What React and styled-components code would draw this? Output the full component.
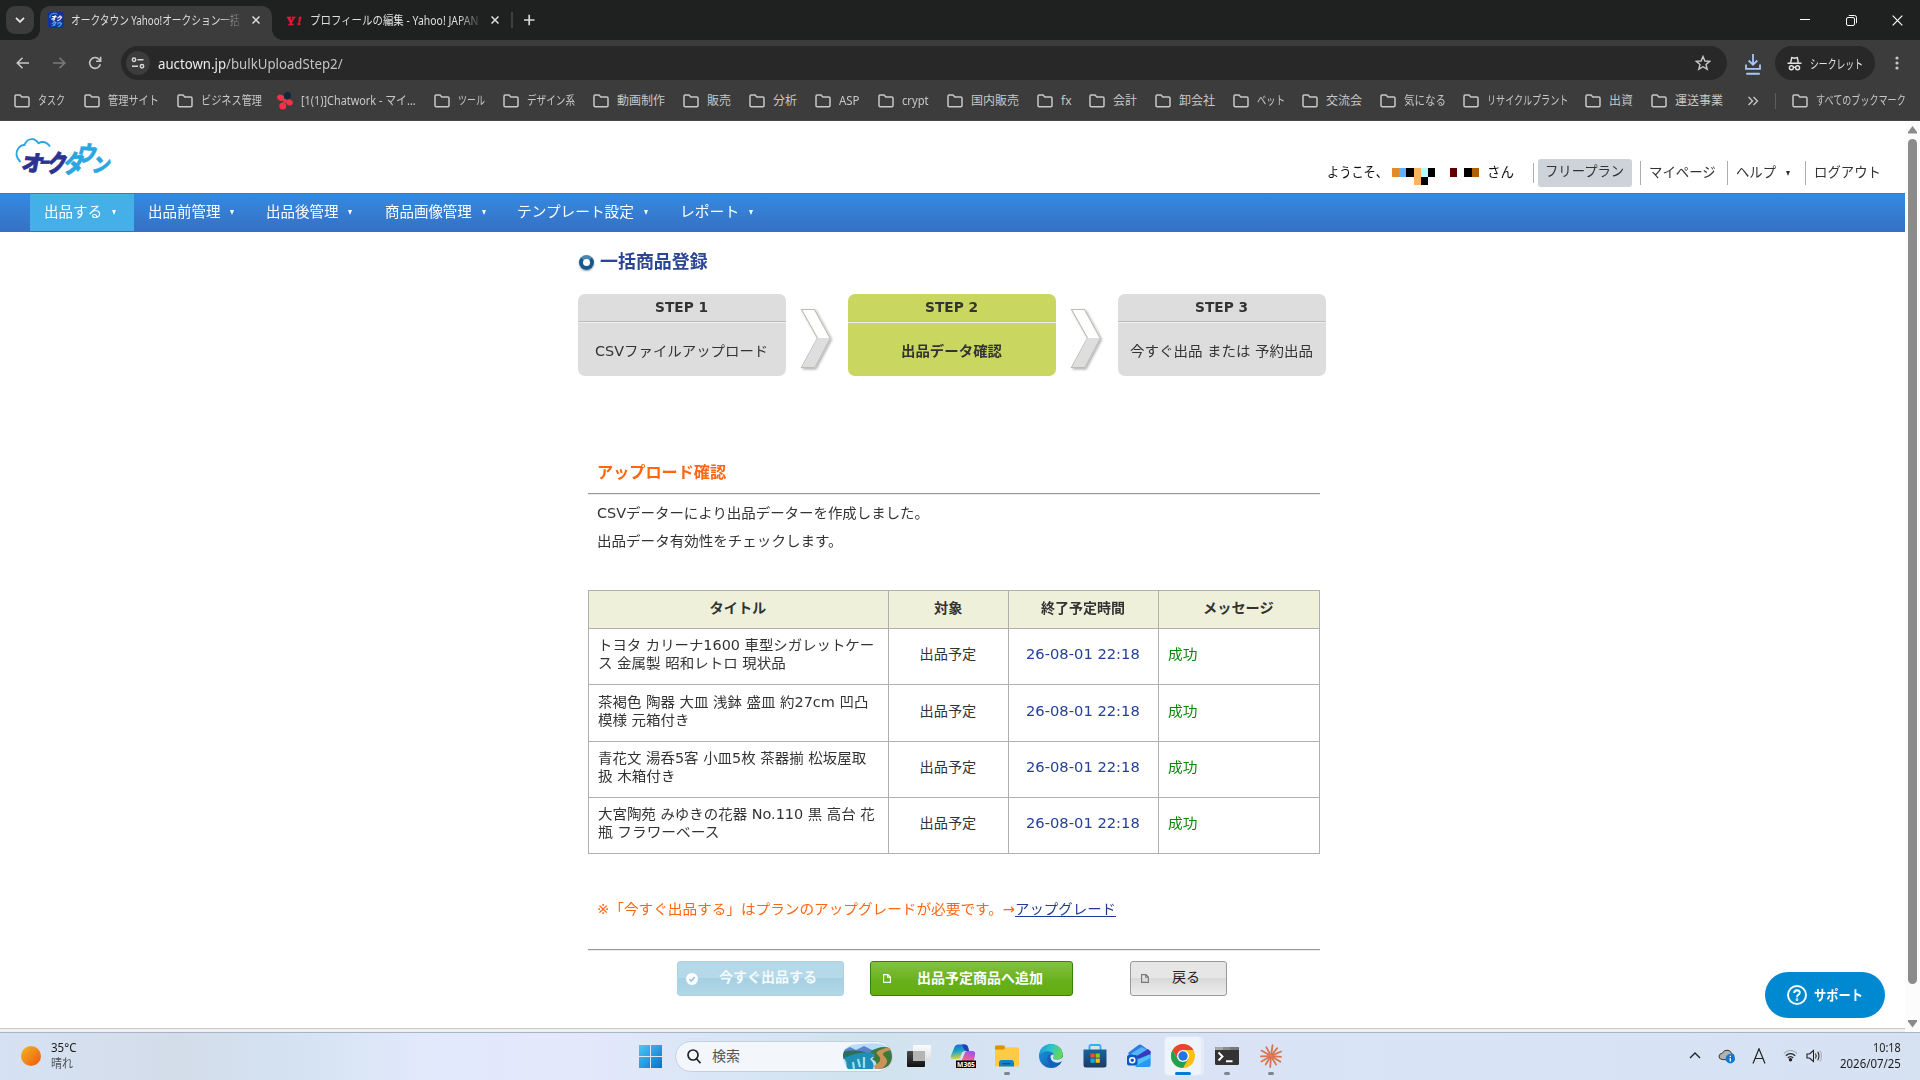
import React, { useLayoutEffect, useRef, useState } from "react";
import styled, { createGlobalStyle, css } from "styled-components";

const UI = `"Noto Sans", "Noto Sans CJK JP", sans-serif`;
const WEB = `"DejaVu Sans", "Noto Sans CJK JP", sans-serif`;

const Global = createGlobalStyle`
  * { box-sizing: border-box; }
  html, body { margin: 0; padding: 0; overflow: hidden; background: #fff; }
  body { font-family: ${WEB}; font-size: 14px; color: #333; }
  svg { display: block; flex: none; }
`;

/* ---------- text fitted to a column width ---------- */
const FitBox = styled.span`
  display: block;
  flex: none;
  width: ${(p) => p.$w}px;
  margin-left: ${(p) => p.$ml || 0}px;
  white-space: pre;
`;
const FitInner = styled.span`
  display: inline-block;
  white-space: pre;
  transform-origin: 0 50%;
`;
function Fit({ w, ml, children }) {
  const ref = useRef(null);
  const [scale, setScale] = useState(1);
  useLayoutEffect(() => {
    const measure = () => {
      if (ref.current && ref.current.offsetWidth) setScale(w / ref.current.offsetWidth);
    };
    measure();
    document.fonts.ready.then(measure);
  }, [w, children]);
  return (
    <FitBox $w={w} $ml={ml}>
      <FitInner ref={ref} style={{ transform: `scaleX(${scale})` }}>{children}</FitInner>
    </FitBox>
  );
}

/* ---------- browser chrome ---------- */
const Screen = styled.div`
  width: 1920px;
  height: 1080px;
  display: flex;
  flex-direction: column;
  overflow: hidden;
`;
const TabStrip = styled.div`
  height: 40px;
  background: #1f2120;
  display: flex;
  align-items: flex-start;
  padding: 6px 0 0 6px;
  font-family: ${UI};
  font-size: 12px;
  color: #dfdfdf;
`;
const TabSearch = styled.div`
  width: 28px;
  height: 28px;
  border-radius: 9px;
  background: #3c3c3c;
  display: flex;
  align-items: center;
  justify-content: center;
`;
const Tab = styled.div`
  position: relative;
  height: 34px;
  display: flex;
  align-items: center;
  padding: 0 0 6px 8px;
  margin-left: ${(p) => (p.$active ? 6 : 7)}px;
  width: ${(p) => (p.$active ? 232 : 227)}px;
  ${(p) =>
    p.$active &&
    css`
      background: #3c3c3c;
      border-radius: 10px 10px 0 0;
      &::before, &::after {
        content: "";
        position: absolute;
        bottom: 0;
        width: 10px;
        height: 10px;
      }
      &::before { left: -10px; background: radial-gradient(circle at 0 0, transparent 9.5px, #3c3c3c 10px); }
      &::after { right: -10px; background: radial-gradient(circle at 100% 0, transparent 9.5px, #3c3c3c 10px); }
    `}
`;
const TabTitle = styled.div`
  width: 170px;
  margin-left: 7px;
  padding-top: 1px;
  line-height: 22px;
  mask-image: linear-gradient(90deg, #000 148px, rgba(0, 0, 0, 0.15) 170px);
`;
const TabClose = styled.div`
  margin-left: 11px;
`;
const StripDivider = styled.div`
  width: 2px;
  height: 16px;
  margin: 6px 10px 0 5px;
  background: #3f4040;
`;
const WindowButtons = styled.div`
  margin-left: auto;
  display: flex;
  height: 28px;
  align-items: center;
`;
const WindowButton = styled.div`
  width: 46px;
  display: flex;
  justify-content: center;
`;
const Toolbar = styled.div`
  height: 45px;
  background: #3c3c3c;
  display: flex;
  align-items: center;
  padding: 1px 0 0 11px;
  color: #c7c7c7;
  font-family: ${UI};
`;
const NavButton = styled.div`
  width: 24px;
  height: 24px;
  margin-right: 12px;
  display: flex;
  align-items: center;
  justify-content: center;
  color: ${(p) => (p.$dim ? "#7b7b7b" : "#c7c7c7")};
`;
const Omnibox = styled.div`
  width: 1606px;
  height: 34px;
  margin-left: 2px;
  border-radius: 17px;
  background: #282828;
  display: flex;
  align-items: center;
  padding: 0 16px 0 5px;
  font-size: 14px;
  color: #c4c4c4;
  b { font-weight: 400; color: #ececec; }
`;
const SiteInfo = styled.div`
  width: 24px;
  height: 24px;
  border-radius: 12px;
  background: #3c3c3c;
  display: flex;
  align-items: center;
  justify-content: center;
  margin-right: 8px;
`;
const Push = styled.div`
  margin-left: auto;
`;
const Downloads = styled.div`
  width: 16px;
  margin: 3px 14px 0 18px;
`;
const Incognito = styled.div`
  width: 100px;
  height: 34px;
  border-radius: 17px;
  background: #282828;
  display: flex;
  align-items: center;
  padding-left: 12px;
  gap: 8px;
  font-size: 12.500px;
  color: #e3e3e3;
`;
const Dots = styled.div`
  margin-left: 20px;
`;
const Bookmarks = styled.div`
  height: 36px;
  background: #3c3c3c;
  border-bottom: 1px solid #474747;
  display: flex;
  align-items: center;
  padding: 0 0 3px 14px;
  font-family: ${UI};
  font-size: 12px;
  line-height: 20px;
  color: #c8c8c8;
`;
const BookmarkItem = styled.div`
  display: flex;
  align-items: center;
  gap: 8px;
  width: ${(p) => p.$w}px;
`;
const BookmarkDivider = styled.div`
  width: 1px;
  height: 16px;
  background: #5d5d5d;
  margin: 0 16px 0 16px;
`;

const bookmarks = [
  [14, "タスク", 27], [84, "管理サイト", 51], [177, "ビジネス管理", 61], [277, "[1(1)]Chatwork - マイ...", 115],
  [434, "ツール", 27], [503, "デザイン系", 48], [593, "動画制作", 48], [683, "販売", 24], [749, "分析", 24],
  [815, "ASP", 21], [878, "crypt", 27], [947, "国内販売", 48], [1037, "fx", 10], [1089, "会計", 24],
  [1155, "卸会社", 36], [1233, "ベット", 28], [1302, "交流会", 36], [1380, "気になる", 42],
  [1463, "リサイクルプラント", 81], [1585, "出資", 24], [1651, "運送事業", 48], [1747, "", 0],
];

const Folder = () => (
  <svg width="16" height="14" viewBox="0 0 16 14" fill="none" stroke="#c7c7c7" strokeWidth="1.5">
    <path d="M1 2.2Q1 1 2.2 1H6l1.8 2h6Q15 3 15 4.200V11.500Q15 12.700 13.800 12.700H2.200Q1 12.700 1 11.500Z" />
  </svg>
);
const Chatwork = () => (
  <svg width="16" height="18" viewBox="0 0 16 18">
    <ellipse cx="3.800" cy="5.800" rx="3.800" ry="3" fill="#f1334a" transform="rotate(25 3.800 5.800)" />
    <ellipse cx="12.500" cy="10.500" rx="3.300" ry="3" fill="#f1334a" transform="rotate(20 12.500 10.500)" />
    <circle cx="5.800" cy="14" r="3.500" fill="#f1334a" />
    <circle cx="8" cy="9" r="2" fill="#f1334a" />
    <circle cx="10.500" cy="3.700" r="3.600" fill="#16263a" />
  </svg>
);
const CloseX = ({ s = 8, w = 1.5, c = "#dedede" }) => (
  <svg width={s} height={s} viewBox="0 0 8 8" stroke={c} strokeWidth={w} fill="none">
    <path d="M.5 .5L7.500 7.500M7.500 .5L.5 7.500" />
  </svg>
);

function Browser() {
  return (
    <>
      <TabStrip>
        <TabSearch>
          <svg width="10" height="6" viewBox="0 0 10 6" fill="none" stroke="#e3e3e3" strokeWidth="1.900"><path d="M1 .8L5 4.800L9 .8" /></svg>
        </TabSearch>
        <Tab $active>
          <svg width="16" height="16" viewBox="0 0 16 16">
            <rect width="16" height="16" rx="2" fill="#17319c" />
            <path d="M2 6Q1.500 1.500 6 1.500Q8 .5 9.500 2.500" fill="none" stroke="#35b0e8" />
            <text transform="translate(2.500 8) rotate(5) skewX(-10)" fontSize="6.500" fontWeight="900" fill="#fff" fontFamily="Noto Sans CJK JP" textLength="11" lengthAdjust="spacingAndGlyphs">オク</text>
            <text transform="translate(2.500 14) rotate(5) skewX(-10)" fontSize="6.500" fontWeight="900" fill="#45b9ee" fontFamily="Noto Sans CJK JP" textLength="11" lengthAdjust="spacingAndGlyphs">タウ</text>
          </svg>
          <TabTitle><Fit w={169}>オークタウン Yahoo!オークション一括</Fit></TabTitle>
          <TabClose><CloseX /></TabClose>
        </Tab>
        <Tab>
          <svg width="16" height="16" viewBox="0 0 16 16">
            <text x="-1" y="12.800" fontSize="12.500" fontWeight="700" fill="#f0123a" stroke="#f0123a" strokeWidth=".6" fontFamily="Liberation Serif">Y</text>
            <text x="9.500" y="12.800" fontSize="13" fontWeight="700" fontStyle="italic" fill="#f0123a" stroke="#f0123a" strokeWidth=".5" fontFamily="Liberation Serif">!</text>
          </svg>
          <TabTitle><Fit w={168}>プロフィールの編集 - Yahoo! JAPAN</Fit></TabTitle>
          <TabClose><CloseX /></TabClose>
        </Tab>
        <StripDivider />
        <svg width="12" height="28" viewBox="0 0 12 28" stroke="#d8d8d8" strokeWidth="1.700"><path d="M1 14H11.500M6.200 8.700V19.300" /></svg>
        <WindowButtons>
          <WindowButton><svg width="10" height="2" viewBox="0 0 10 2"><path d="M0 .5H10" stroke="#fff" /></svg></WindowButton>
          <WindowButton>
            <svg width="11" height="11" viewBox="0 0 11 11" fill="none" stroke="#fff">
              <rect x=".5" y="2.500" width="8" height="8" rx="1.500" />
              <path d="M2.800 .5H8.500Q10.500 .5 10.500 2.500V8.200" />
            </svg>
          </WindowButton>
          <WindowButton><CloseX s={11} w={0.85} c="#fff" /></WindowButton>
        </WindowButtons>
      </TabStrip>
      <Toolbar>
        <NavButton>
          <svg width="14" height="12" viewBox="0 0 14 12" fill="none" stroke="currentColor" strokeWidth="1.600"><path d="M13 6H1.500M6.500 .8L1.300 6L6.500 11.200" /></svg>
        </NavButton>
        <NavButton $dim>
          <svg width="14" height="12" viewBox="0 0 14 12" fill="none" stroke="currentColor" strokeWidth="1.600"><path d="M1 6H12.500M7.500 .8L12.700 6L7.500 11.200" /></svg>
        </NavButton>
        <NavButton>
          <svg width="14" height="14" viewBox="0 0 14 14" fill="none" stroke="currentColor" strokeWidth="1.600">
            <path d="M12.300 8.300A5.400 5.400 0 1 1 11.200 3.500L12.500 5" />
            <path d="M12.600 .8V5.300H8.100" />
          </svg>
        </NavButton>
        <Omnibox>
          <SiteInfo>
            <svg width="14" height="12" viewBox="0 0 14 12" fill="none" stroke="#d5d5d5" strokeWidth="1.500">
              <circle cx="3" cy="2.700" r="1.700" /><path d="M6.500 2.700H12.500M1 9.200H7" /><circle cx="11" cy="9.200" r="1.700" />
            </svg>
          </SiteInfo>
          <Fit w={185}><b>auctown.jp</b>/bulkUploadStep2/</Fit>
          <Push>
            <svg width="16" height="16" viewBox="0 0 16 16" fill="none" stroke="#c7c7c7" strokeWidth="1.400"><path d="M8 1.500L9.900 6L14.700 6.400L11 9.500L12.200 14.200L8 11.700L3.800 14.200L5 9.500L1.300 6.400L6.100 6Z" /></svg>
          </Push>
        </Omnibox>
        <Downloads>
          <svg width="16" height="21" viewBox="0 0 16 21" fill="none" stroke="#a8c7fa" strokeWidth="1.800">
            <path d="M8 0V10.500M3.700 6.500L8 10.800L12.300 6.500M1 10.500V14.900H15V10.500" /><path d="M2 19.700H14" strokeWidth="2" strokeLinecap="round" />
          </svg>
        </Downloads>
        <Incognito>
          <svg width="15" height="15" viewBox="0 0 15 15" fill="none" stroke="#e3e3e3" strokeWidth="1.400">
            <path d="M3.700 6.500L4.700 1.500L7.500 2.200L10.300 1.500L11.300 6.500M.5 7.200H14.500" />
            <circle cx="4.400" cy="11.700" r="2" /><circle cx="10.600" cy="11.700" r="2" /><path d="M6.300 11.300H8.700" />
          </svg>
          <Fit w={53}>シークレット</Fit>
        </Incognito>
        <Dots><svg width="4" height="14" viewBox="0 0 4 14" fill="#c7c7c7"><circle cx="2" cy="2" r="1.600" /><circle cx="2" cy="7" r="1.600" /><circle cx="2" cy="12" r="1.600" /></svg></Dots>
      </Toolbar>
      <Bookmarks>
        {bookmarks.slice(0, -1).map(([x, label, tw], i) => (
          <BookmarkItem key={label} $w={bookmarks[i + 1][0] - x}>
            {label.includes("Chatwork") ? <Chatwork /> : <Folder />}
            <Fit w={tw}>{label}</Fit>
          </BookmarkItem>
        ))}
        <svg width="12" height="10" viewBox="0 0 12 10" fill="none" stroke="#c7c7c7" strokeWidth="1.400"><path d="M1.500 1L5.500 5L1.500 9M6.500 1L10.500 5L6.500 9" /></svg>
        <BookmarkDivider />
        <BookmarkItem $w={120}><Folder /><Fit w={90}>すべてのブックマーク</Fit></BookmarkItem>
      </Bookmarks>
    </>
  );
}

/* ---------- web page ---------- */
const Viewport = styled.div`
  height: 911px;
  display: flex;
  flex: none;
  background: #fff;
`;
const Page = styled.div`
  width: 1905px;
  height: 911px;
  display: flex;
  flex-direction: column;
  position: relative;
`;
const ScrollTrack = styled.div`
  width: 15px;
  background: #fcfcfc;
  display: flex;
  flex-direction: column;
  align-items: center;
  padding: 5px 0 4px;
`;
const Thumb = styled.div`
  width: 9px;
  height: 845px;
  margin: 5px 0 auto;
  border-radius: 5px;
  background: #8b8b8b;
`;
const SiteHeader = styled.header`
  height: 72px;
  display: flex;
  flex: none;
  padding-left: 14px;
`;
const LogoBox = styled.div`
  padding-top: 15px;
  svg { overflow: visible; }
`;
const Account = styled.div`
  margin-left: auto;
  display: flex;
  align-items: center;
  height: 28px;
  margin-top: 38px;
  padding-right: 24px;
  font-size: 14px;
  line-height: 24px;
  ${FitBox} { padding-bottom: 2px; }
`;
const Welcome = styled.div`
  display: flex;
  align-items: center;
  color: #111;
`;
const Sep = styled.div`
  width: 1px;
  height: ${(p) => p.$h || 24}px;
  background: #aaadb0;
  margin: 0 ${(p) => p.$r}px 0 ${(p) => p.$l}px;
`;
const Plan = styled.div`
  width: 94px;
  height: 28px;
  border-radius: 3px;
  background: #ced3da;
  padding-left: 7px;
`;
const Mosaic = styled.div`
  display: grid;
  grid-template-columns: 7px 7px 8px 7px 7px 7px 15px 7px 7px 8px 7px;
  grid-template-rows: 9px 8px;
  margin: 6px 8px 0 4px;
`;
const Cell = styled.i`
  background: ${(p) => p.$c};
`;
const MainNav = styled.nav`
  height: 39px;
  flex: none;
  display: flex;
  background: linear-gradient(#348ae0, #3670c4);
  border-top: 1px solid #2a80d8;
  padding-left: 30px;
  color: #fff;
`;
const NavEntry = styled.div`
  height: 37px;
  width: ${(p) => p.$w}px;
  padding: 0 0 1px 14px;
  display: flex;
  align-items: center;
  background: ${(p) => (p.$active ? "#45b0e8" : "transparent")};
  font-size: 14.3px;
  ${FitBox} { padding-bottom: 4px; }
`;
const Caret = styled.span`
  width: 0;
  height: 0;
  border: 2.500px solid transparent;
  border-top: 5px solid ${(p) => p.$c || "#fff"};
  border-bottom: 0;
  margin-left: 10px;
`;
const Main = styled.main`
  width: 748px;
  margin-left: 578px;
`;
const TitleRow = styled.h1`
  display: flex;
  align-items: center;
  gap: 6px;
  height: 28px;
  margin: 16px 0 0;
  padding-left: 1px;
  font-size: 17.8px;
  line-height: 28px;
  color: #2c4693;
`;
const Bullet = styled.span`
  width: 15px;
  height: 15px;
  border-radius: 50%;
  border: 4.500px solid #15598f;
  border-top-color: #4a86b0;
  box-shadow: 0 1px 2px #999;
`;
const Steps = styled.div`
  display: flex;
  margin-top: 18px;
  height: 82px;
`;
const Step = styled.div`
  width: 208px;
  height: 82px;
  border-radius: 7px;
  overflow: hidden;
  background: ${(p) => (p.$on ? "#c9d761" : "#ddd")};
`;
const StepHead = styled.div`
  height: 29px;
  border-bottom: 1px solid #efefef;
  box-shadow: inset 0 -1px 0 #bcbcbc;
  display: flex;
  justify-content: center;
  padding-right: 2px;
  font-weight: 700;
  font-size: 14px;
  line-height: 26px;
`;
const StepBody = styled.div`
  display: flex;
  justify-content: center;
  padding: 15px 2px 0 0;
  line-height: 26px;
  font-weight: ${(p) => (p.$on ? 700 : 400)};
`;
const Chevron = styled.div`
  width: 62px;
  padding: 14px 0 0 14px;
`;
const Section = styled.section`
  width: 732px;
  margin: 83px 0 0 10px;
`;
const SectionTitle = styled.h2`
  margin: 0;
  height: 34px;
  padding-left: 9px;
  font-size: 16px;
  line-height: 28px;
  color: #ff6613;
`;
const Rule = styled.div`
  height: 2px;
  background: #999;
  border-bottom: 1px solid #ececec;
`;
const Line = styled.div`
  height: 28px;
  line-height: 28px;
  padding-left: 9px;
  display: flex;
`;
const Lines = styled.div`
  padding: 4px 0 35px;
`;
const Table = styled.div`
  display: grid;
  grid-template-columns: 300px 120px 150px 161px;
  grid-template-rows: 38px 56px 57px 56px 56px;
  border: solid #b0b0ae;
  border-width: 1px 0 0 1px;
`;
const Td = styled.div`
  border: solid #b0b0ae;
  border-width: 0 1px 1px 0;
  display: flex;
  flex-direction: column;
  justify-content: center;
  align-items: ${(p) => (p.$left ? "flex-start" : "center")};
  padding-left: ${(p) => (p.$left ? 9 : 0)}px;
  padding-right: ${(p) => (p.$left ? 0 : 1)}px;
  padding-bottom: ${(p) => (p.$head ? 2 : 3)}px;
  line-height: 17.800px;
  font-size: 14.2px;
  color: ${(p) => p.$c || "#333"};
  background: ${(p) => (p.$head ? "#eef0d9" : "#fff")};
  font-weight: ${(p) => (p.$head ? 700 : 400)};
`;
const Note = styled.div`
  display: flex;
  padding-left: 9px;
  margin-top: 41px;
  height: 54px;
  line-height: 28px;
  color: #ff6613;
`;
const Link = styled.a`
  color: #203a92;
  box-shadow: inset 0 -1px 0 #203a92;
  height: 22px;
`;
const Buttons = styled.div`
  display: flex;
  padding: 10px 0 0 89px;
`;
const skins = {
  blue: css`
    width: 167px; margin-right: 26px; color: #f4fafd; font-weight: 700;
    border: 1px solid #a9d3e5;
    background: linear-gradient(#b5d9e9 50%, #a5d0e2 50%, #b3d8e7);
  `,
  green: css`
    width: 203px; margin-right: 57px; color: #fff; font-weight: 700;
    border: 1px solid #31830c;
    background: linear-gradient(#85c142, #67b01a 60%, #62ad12);
  `,
  gray: css`
    width: 97px; color: #222;
    border: 1px solid #999;
    background: linear-gradient(#e6e6e6 50%, #d9d9d9 50%, #ededed);
  `,
};
const Button = styled.div`
  height: 35px;
  border-radius: 3px;
  display: flex;
  align-items: center;
  padding: 0 0 0 ${(p) => p.$pl}px;
  gap: ${(p) => p.$gap}px;
  line-height: 26px;
  ${FitBox} { padding-bottom: ${(p) => (p.$skin === "green" ? 2 : 4)}px; }
  ${(p) => skins[p.$skin]}
`;
const Support = styled.div`
  position: absolute;
  left: 1765px;
  top: 851px;
  width: 120px;
  height: 46px;
  border-radius: 23px;
  background: #0089d0;
  color: #fff;
  font: 700 14px/24px ${UI};
  display: flex;
  align-items: center;
  padding-left: 22px;
  gap: 7px;
`;
const PageEdge = styled.div`
  margin-top: auto;
  height: 4px;
  background: #efefef;
  border-top: 1px solid #c9c9c9;
`;

const M = { k: "#000", o: "#ffb25f", d: "#df8b26", b: "#5fb0ff", c: "#b2ffff", r: "#5f0000", n: "#b25f00", _: "transparent" };

const Logo = () => (
  <svg width="98" height="42" viewBox="14 136 98 42" fontFamily="Noto Sans CJK JP" fontWeight="900">
    <path d="M20.500 162Q13.500 155 18.500 148Q21.500 144.500 24.500 145Q27 138 34 139.300Q37 140.500 38.500 143.200Q45 139.500 50 146.500" fill="none" stroke="#2ba6e1" strokeWidth="1.900" />
    <g fill="#2b3390" stroke="#2b3390" strokeWidth=".7">
      <text transform="translate(20.500 170.500) rotate(3) skewX(-9)" fontSize="22">オ</text>
      <text transform="translate(39 168) skewX(-9) scale(.68 1)" fontSize="15">ー</text>
      <text transform="translate(46 172) rotate(2) skewX(-9) scale(.85 1.080)" fontSize="23">ク</text>
    </g>
    <g fill="#2ba6e1" stroke="#2ba6e1" strokeWidth=".5">
      <text transform="translate(62.500 173) skewX(-9) scale(.86 1.050)" fontSize="24">タ</text>
      <text transform="translate(75.500 160.500) rotate(5) skewX(-9) scale(.9 1)" fontSize="22">ウ</text>
      <text transform="translate(91 171.500) skewX(-12) scale(.92 1)" fontSize="20">ン</text>
    </g>
  </svg>
);
const ChevronArt = () => (
  <svg width="36" height="66" viewBox="0 0 36 66">
    <defs><filter id="sh" x="-20%" y="-20%" width="150%" height="150%"><feDropShadow dx="1.500" dy="1.500" stdDeviation="1" floodOpacity=".3" /></filter></defs>
    <g filter="url(#sh)">
      <path d="M1.500 1.500H14.500L30 30L14.500 59.500H1.500L17.500 30Z" fill="#fff" stroke="#bcbcb4" strokeWidth="1.100" />
      <path d="M17.500 30H29.800L14.300 59H2.300Z" fill="#dedede" />
    </g>
  </svg>
);
const FileIcon = ({ c }) => (
  <svg width="8" height="9" viewBox="0 0 8 9" fill="none" stroke={c} strokeWidth="1.100"><path d="M.6 .6H5L7.400 3V8.400H.6ZM4.700 .6V3.200H7.400" /></svg>
);

const navItems = [["出品する", 58, 104, 1], ["出品前管理", 72, 118], ["出品後管理", 72, 119], ["商品画像管理", 87, 132], ["テンプレート設定", 117, 163], ["レポート", 59, 110]];
const rows = [
  [["トヨタ カリーナ1600 車型シガレットケー", 276], ["ス 金属製 昭和レトロ 現状品", 188]],
  [["茶褐色 陶器 大皿 浅鉢 盛皿 約27cm 凹凸", 270], ["模様 元箱付き", 92]],
  [["青花文 湯呑5客 小皿5枚 茶器揃 松坂屋取", 268], ["扱 木箱付き", 77]],
  [["大宮陶苑 みゆきの花器 No.110 黒 高台 花", 277], ["瓶 フラワーベース", 121]],
];

function Site() {
  return (
    <Viewport>
      <Page>
        <SiteHeader>
          <LogoBox><Logo /></LogoBox>
          <Account>
            <Welcome>
              <Fit w={61}>ようこそ、</Fit>
              <Mosaic>
                {[..."dbkock_r_kn___ok_____"].map((ch, i) => (
                  <Cell key={i} $c={M[ch]} />
                ))}
              </Mosaic>
              <Fit w={27}>さん</Fit>
            </Welcome>
            <Sep $l={19} $r={4} $h={20} />
            <Plan><Fit w={79}>フリープラン</Fit></Plan>
            <Sep $l={8} $r={8} />
            <Fit w={67}>マイページ</Fit>
            <Sep $l={11} $r={8} />
            <Fit w={40}>ヘルプ</Fit>
            <Caret $c="#333" />
            <Sep $l={15} $r={8} />
            <Fit w={67}>ログアウト</Fit>
          </Account>
        </SiteHeader>
        <MainNav>
          {navItems.map(([t, w, slot, on]) => (
            <NavEntry key={t} $w={slot} $active={on}><Fit w={w}>{t}</Fit><Caret /></NavEntry>
          ))}
        </MainNav>
        <Main>
          <TitleRow><Bullet /><Fit w={108}>一括商品登録</Fit></TitleRow>
          <Steps>
            <Step><StepHead><Fit w={53}>STEP 1</Fit></StepHead><StepBody><Fit w={173}>CSVファイルアップロード</Fit></StepBody></Step>
            <Chevron><ChevronArt /></Chevron>
            <Step $on><StepHead><Fit w={53}>STEP 2</Fit></StepHead><StepBody $on><Fit w={101}>出品データ確認</Fit></StepBody></Step>
            <Chevron><ChevronArt /></Chevron>
            <Step><StepHead><Fit w={53}>STEP 3</Fit></StepHead><StepBody><Fit w={183}>今すぐ出品 または 予約出品</Fit></StepBody></Step>
          </Steps>
          <Section>
            <SectionTitle><Fit w={129}>アップロード確認</Fit></SectionTitle>
            <Rule />
            <Lines>
              <Line><Fit w={332}>CSVデーターにより出品データーを作成しました。</Fit></Line>
              <Line><Fit w={246}>出品データ有効性をチェックします。</Fit></Line>
            </Lines>
            <Table>
              <Td $head><Fit w={57}>タイトル</Fit></Td>
              <Td $head><Fit w={28}>対象</Fit></Td>
              <Td $head><Fit w={84}>終了予定時間</Fit></Td>
              <Td $head><Fit w={71}>メッセージ</Fit></Td>
              {rows.map((lines, i) => (
                <React.Fragment key={i}>
                  <Td $left>{lines.map(([t, w]) => <Fit key={t} w={w}>{t}</Fit>)}</Td>
                  <Td><Fit w={57}>出品予定</Fit></Td>
                  <Td $c="#24409a"><Fit w={114}>26-08-01 22:18</Fit></Td>
                  <Td $left $c="#0a850a"><Fit w={29}>成功</Fit></Td>
                </React.Fragment>
              ))}
            </Table>
            <Note><Fit w={418}>※「今すぐ出品する」はプランのアップグレードが必要です。→</Fit><Link><Fit w={101}>アップグレード</Fit></Link></Note>
            <Rule />
            <Buttons>
              <Button $skin="blue" $pl={8} $gap={21}>
                <svg width="12" height="12" viewBox="0 0 12 12"><circle cx="6" cy="6" r="6" fill="#fff" /><path d="M3.500 6.200L5.300 8L8.700 4" fill="none" stroke="#8fc5dc" strokeWidth="1.600" /></svg>
                <Fit w={98}>今すぐ出品する</Fit>
              </Button>
              <Button $skin="green" $pl={12} $gap={26}><FileIcon c="#fff" /><Fit w={126}>出品予定商品へ追加</Fit></Button>
              <Button $skin="gray" $pl={10} $gap={23}><FileIcon c="#777" /><Fit w={28}>戻る</Fit></Button>
            </Buttons>
          </Section>
        </Main>
        <Support>
          <svg width="20" height="20" viewBox="0 0 20 20" fill="none" stroke="#fff" strokeWidth="1.900">
            <circle cx="10" cy="10" r="9" /><path d="M7.200 8Q7.400 5.300 10.100 5.300Q12.800 5.400 12.800 7.700Q12.700 9.200 10.900 10.200Q10 10.800 10 12.200" /><circle cx="10" cy="14.700" r=".4" />
          </svg>
          <Fit w={49}>サポート</Fit>
        </Support>
        <PageEdge />
      </Page>
      <ScrollTrack>
        <svg width="9" height="8" viewBox="0 0 9 8"><path d="M4.500 0L9 6V7.500H0V6Z" fill="#8b8b8b" /></svg>
        <Thumb />
        <svg width="9" height="8" viewBox="0 0 9 8"><path d="M4.500 7.500L9 1.500V0H0V1.500Z" fill="#8b8b8b" /></svg>
      </ScrollTrack>
    </Viewport>
  );
}

/* ---------- taskbar ---------- */
const Taskbar = styled.div`
  height: 48px;
  flex: none;
  border-top: 1px solid #a9b5c8;
  background: linear-gradient(90deg, #d6e2f3, #d3dce9 9%, #d4e2f1 15%, #e1e9fb 22%, #e4e8fb 30%, #d9e6f6 37%, #d1e3ef 45%, #d6e3f2 52%, #d9e3f5 62%, #d8e4f5 80%, #d6e1f2);
  display: flex;
  font-family: ${UI};
  font-size: 12px;
  color: #1b1b1b;
`;
const Weather = styled.div`
  width: 639px;
  padding: 0 0 2px 21px;
  display: flex;
  align-items: center;
  gap: 10px;
`;
const Stack = styled.div`
  display: flex;
  flex-direction: column;
  align-items: ${(p) => (p.$end ? "flex-end" : "flex-start")};
  line-height: 15.500px;
  span:nth-child(2) { color: ${(p) => (p.$end ? "#1b1b1b" : "#4c5158")}; }
`;
const StartIcon = styled.div`
  width: 36px;
  padding-top: 12px;
`;
const Search = styled.div`
  width: 218px;
  height: 31px;
  margin: 8px 4px 0 0;
  border-radius: 16px;
  background: #f3f7fc;
  border: 1px solid #c6d0dd;
  display: flex;
  align-items: center;
  padding-left: 11px;
  font-size: 14px;
  color: #555;
  line-height: 22px;
  ${FitBox} { padding-bottom: 2px; }
`;
const SearchArt = styled.div`
  margin-left: auto;
`;
const AppSlot = styled.div`
  width: 44px;
  height: 47px;
  display: flex;
  flex-direction: column;
  align-items: center;
`;
const Tile = styled.div`
  width: 36px;
  height: 38px;
  margin-top: 4px;
  padding-bottom: 1px;
  border-radius: 4px;
  display: flex;
  align-items: center;
  justify-content: center;
  background: ${(p) => (p.$active ? "#eef4fc" : "transparent")};
  box-shadow: ${(p) => (p.$active ? "0 0 0 1px #dfe8f3, 3px 0 0 #e6edf8" : "none")};
`;
const Mark = styled.div`
  width: ${(p) => (p.$active ? 16 : 6)}px;
  height: 3px;
  margin-top: -3px;
  border-radius: 2px;
  background: ${(p) => (p.$active ? "#0a78d4" : "#7d858d")};
  position: relative;
`;
const Tray = styled.div`
  margin-left: auto;
  display: flex;
  align-items: center;
  padding: 0 19px 2px 0;
`;
const TrayItem = styled.div`
  width: ${(p) => p.$w}px;
  display: flex;
  justify-content: center;
`;

const icons = {
  task: (
    <svg width="24" height="24" viewBox="0 0 24 24">
      <defs><linearGradient id="tk" x1="0" y1="0" x2="0" y2="1"><stop offset="0" stopColor="#4a4a4a" /><stop offset="1" stopColor="#111" /></linearGradient>
        <linearGradient id="tw" x1="0" y1="0" x2="0" y2="1"><stop offset="0" stopColor="#fff" /><stop offset="1" stopColor="#dcdcdc" /></linearGradient></defs>
      <rect x="0" y="7" width="18" height="16" rx="1" fill="url(#tk)" />
      <rect x="6" y="1" width="18" height="16" rx="1" fill="url(#tw)" opacity=".9" />
      <rect x="6" y="7" width="12" height="10" fill="#b4b4b4" />
    </svg>
  ),
  m365: (
    <svg width="26" height="24" viewBox="0 0 26 24">
      <defs>
        <linearGradient id="ma" x1=".3" y1="0" x2=".5" y2="1"><stop offset="0" stopColor="#1c68dc" /><stop offset=".45" stopColor="#18a5c8" /><stop offset="1" stopColor="#f2d530" /></linearGradient>
        <linearGradient id="mb" x1=".8" y1="0" x2=".3" y2="1"><stop offset="0" stopColor="#9a50ec" /><stop offset="1" stopColor="#f56a90" /></linearGradient>
      </defs>
      <path d="M8 .5H15Q17.500 .5 18 3L19 7H16Q12.500 7 11.500 10L10 14Q9.500 15 7 15H3Q0 15 1 11.500L4.500 3Q5.300 .5 8 .5Z" fill="url(#ma)" />
      <path d="M17 7H22Q26 7 25 11L23.800 17H11.500L14.500 9.500Q15.200 7 17 7Z" fill="url(#mb)" />
      <path d="M12 .5H15Q17.500 .5 18 3L19 7H16.500Q14.500 7 13.800 5Z" fill="#2041b8" />
      <rect x="6" y="16.500" width="20" height="7.500" fill="#000" />
      <text x="7" y="23" fontSize="7.500" fontWeight="700" fill="#fff" textLength="18" lengthAdjust="spacingAndGlyphs" fontFamily="Noto Sans">M365</text>
    </svg>
  ),
  files: (
    <svg width="24" height="22" viewBox="0 0 24 22">
      <path d="M0 2Q0 .5 1.500 .5H8Q9.500 .5 10 2.500H22.500Q24 2.500 24 4V10H0Z" fill="#fdc32f" />
      <path d="M0 2Q0 .5 1.500 .5H8Q10 .5 10 2.500Q10 4.500 8 4.500H0Z" fill="#d99300" />
      <path d="M0 5H8Q9.500 5 10.500 3H24V20Q24 21.500 22.500 21.500H1.500Q0 21.500 0 20Z" fill="#fecb45" />
      <path d="M4 21.500V18Q4 15 7 15H16Q19 15 19 18V21.500Z" fill="#1580cc" />
      <rect x="7.500" y="18" width="8" height="1.400" fill="#0b5394" />
    </svg>
  ),
  edge: (
    <svg width="24" height="24" viewBox="0 0 24 24">
      <defs>
        <linearGradient id="ea" x1="0" y1="0" x2="1" y2=".3"><stop offset="0" stopColor="#1b8fdc" /><stop offset=".5" stopColor="#2cc3d0" /><stop offset="1" stopColor="#63d957" /></linearGradient>
        <linearGradient id="eb" x1="0" y1="0" x2="1" y2="1"><stop offset="0" stopColor="#1c9ce2" /><stop offset="1" stopColor="#0c4fa8" /></linearGradient>
        <clipPath id="ec"><circle cx="12" cy="12" r="12" /></clipPath>
      </defs>
      <g clipPath="url(#ec)">
        <rect width="24" height="24" fill="url(#eb)" />
        <path d="M0 11Q1.500 0 12.500 0Q24 .8 24 10.200Q23.300 15.800 17.300 15.800Q13.500 15.800 14.200 13.800Q15.500 12.500 14.800 10.500Q13 7.200 8.500 7.200Q2.500 7.200 0 11Z" fill="url(#ea)" />
        <path d="M9 11Q6.500 20 14 23.500Q20 23 22.800 18.500Q19.500 20.500 14.500 18Q10.300 15.600 11.700 11.500Z" fill="#1062bb" />
      </g>
      <path d="M11.700 12Q10.800 15.500 14.500 17.700Q19 19.800 22.300 17.600Q23.300 17.500 24.300 14.500V12Q22 16.200 17.300 15.800Q13.500 15.800 14.200 13.800Q15.200 12.500 14.500 10.500Q12.300 10 11.700 12Z" fill="#d6e4f3" />
    </svg>
  ),
  store: (
    <svg width="24" height="24" viewBox="0 0 24 24">
      <defs><linearGradient id="st" x1="0" y1="0" x2="0" y2="1"><stop offset="0" stopColor="#17649f" /><stop offset="1" stopColor="#1d3a63" /></linearGradient></defs>
      <path d="M6.500 6V2.500Q6.500 1 8 1H16Q17.500 1 17.500 2.500V6" fill="none" stroke="#28b4f5" strokeWidth="1.900" />
      <path d="M.5 5.500H23.500V21Q23.500 23.500 21 23.500H3Q.5 23.500 .5 21Z" fill="url(#st)" />
      <rect x="7.500" y="9.500" width="4.200" height="4.200" fill="#f1511b" /><rect x="12.600" y="9.500" width="4.200" height="4.200" fill="#80cc28" />
      <rect x="7.500" y="14.600" width="4.200" height="4.200" fill="#00adef" /><rect x="12.600" y="14.600" width="4.200" height="4.200" fill="#fbbc09" />
    </svg>
  ),
  outlook: (
    <svg width="24" height="24" viewBox="0 0 24 24">
      <path d="M1.500 8.500L11.500 1Q13 0 14.500 1L23.500 7.500V14L8 16L1.500 13Z" fill="#2a7be4" />
      <path d="M4 9.500L14.500 3L23.500 7.500L13 14.500Z" fill="#54b4f5" />
      <path d="M9 12.500L21 5L23.500 7.500V10.500L14 16Z" fill="#3c37c4" />
      <path d="M9 16L23.500 10V20.500Q23.500 23 21 23H9Z" fill="#4cc2f8" />
      <path d="M8 22.500L23.500 14V20.500Q23.500 23 21 23H9Z" fill="#2b96f0" />
      <rect x="0" y="11" width="10.500" height="10.500" rx="2" fill="#0f59bd" />
      <circle cx="5.250" cy="16.250" r="2.500" fill="none" stroke="#fff" strokeWidth="1.500" />
    </svg>
  ),
  chrome: (
    <svg width="24" height="24" viewBox="0 0 24 24">
      <circle cx="12" cy="12" r="12" fill="#fbc116" />
      <path d="M12 6H22.400A12 12 0 0 0 1.600 6L6.800 15Z" fill="#ea4335" />
      <path d="M17.200 15L12 24A12 12 0 0 1 1.600 6L6.800 15Z" fill="#1fa353" />
      <circle cx="12" cy="12" r="6" fill="#fff" /><circle cx="12" cy="12" r="4.700" fill="#2672e8" />
    </svg>
  ),
  term: (
    <svg width="24" height="18" viewBox="0 0 24 18">
      <rect width="24" height="18" rx="1.500" fill="#333" /><path d="M0 1.500Q0 0 1.500 0H22.500Q24 0 24 1.500V3H0Z" fill="#777" /><path d="M0 1.500Q0 0 1.500 0H8V3H0Z" fill="#a8a8a8" /><path d="M8 0H15V3H8Z" fill="#8b8b8b" />
      <path d="M3.500 5.500L7.500 9.500L3.500 13.500M11 14.200H17.500" fill="none" stroke="#fff" strokeWidth="1.900" />
    </svg>
  ),
  claude: (
    <svg width="24" height="24" viewBox="0 0 24 24" stroke="#d97350" strokeWidth="1.800" strokeLinecap="round">
      {[8, 38, 66, 95, 122, 150, 184, 212, 240, 268, 300, 332].map((a, i) => (
        <path key={a} d={`M12 10.500V${i % 2 ? 2 : 1}`} transform={`rotate(${a} 12 12)`} />
      ))}
    </svg>
  ),
};
const apps = ["task", "m365", "files", "edge", "store", "outlook", "chrome", "term", "claude"];
const running = ["files", "chrome", "term", "claude"];

function Bar() {
  return (
    <Taskbar>
      <Weather>
        <svg width="20" height="20" viewBox="0 0 20 20">
          <defs><linearGradient id="sun" x1="0" y1="0" x2="1" y2="1"><stop offset="0" stopColor="#f0b828" /><stop offset="1" stopColor="#f0560a" /></linearGradient></defs>
          <circle cx="10" cy="10" r="10" fill="url(#sun)" />
        </svg>
        <Stack><Fit w={25}>35°C</Fit><Fit w={22}>晴れ</Fit></Stack>
      </Weather>
      <StartIcon>
        <svg width="23" height="23" viewBox="0 0 23 23">
          <defs><linearGradient id="wn" x1="0" y1="0" x2="1" y2="1"><stop offset="0" stopColor="#4cc8f5" /><stop offset="1" stopColor="#0870cc" /></linearGradient></defs>
          <path d="M0 0H11V11H0ZM12 0H23V11H12ZM0 12H11V23H0ZM12 12H23V23H12Z" fill="url(#wn)" />
        </svg>
      </StartIcon>
      <Search>
        <svg width="14" height="15" viewBox="0 0 14 15" fill="none" stroke="#222" strokeWidth="1.700"><circle cx="6" cy="6" r="5" /><path d="M9.500 9.800L13.500 14.200" /></svg>
        <Fit w={28} ml={11}>検索</Fit>
        <SearchArt>
          <svg width="50" height="27" viewBox="0 0 50 27">
            <defs><clipPath id="pc"><path d="M10 2Q30 -1 40 1Q50 4 50 14Q49 26 36 26L6 26Q1 20 1 12Q2 4 10 2Z" /></clipPath></defs>
            <g clipPath="url(#pc)">
              <rect width="50" height="27" fill="#b9dcf8" />
              <path d="M0 8L8 4L14 7L22 3L30 7L50 4V14H0Z" fill="#5b83c9" />
              <path d="M0 9Q12 6 24 9L20 14L0 16Z" fill="#2d6e5b" />
              <path d="M2 15Q14 9 30 9Q34 12 28 16Q34 22 30 27H4Q6 20 2 15Z" fill="#1f8fb8" />
              <path d="M16 16L18 24M22 14L22 25M11 19L12 26" stroke="#9fe0e6" strokeWidth="2.200" />
              <path d="M28 9Q40 1 50 6V27H32Q38 20 30 16Q36 12 28 9Z" fill="#3c7a3a" />
              <path d="M48 4Q30 8 36 12Q42 17 32 23L34 27H38Q50 19 42 13Q38 9 50 7Z" fill="#c9935a" />
            </g>
          </svg>
        </SearchArt>
      </Search>
      {apps.map((a) => (
        <AppSlot key={a}>
          <Tile $active={a === "chrome"}>{icons[a]}</Tile>
          {running.includes(a) && <Mark $active={a === "chrome"} />}
        </AppSlot>
      ))}
      <Tray>
        <TrayItem $w={42}><svg width="12" height="7" viewBox="0 0 12 7" fill="none" stroke="#222" strokeWidth="1.400"><path d="M1 6L6 1L11 6" /></svg></TrayItem>
        <TrayItem $w={22}>
          <svg width="18" height="16" viewBox="0 0 18 16">
            <path d="M4 11.500Q.8 11 1 8Q1.500 5.500 4 5.500Q6 1.500 10 2.200Q13 3 13.500 5.500Q16 6 16 8.500L12 12Z" fill="#b5b3b0" stroke="#3a3a3a" />
            <circle cx="12.300" cy="10.800" r="4.700" fill="#0b78d8" /><path d="M12.300 10V13.500M12.300 7.800V9" stroke="#fff" strokeWidth="1.300" />
          </svg>
        </TrayItem>
        <TrayItem $w={42}><svg width="14" height="16" viewBox="0 0 14 16" fill="none" stroke="#222" strokeWidth="1.200"><path d="M1 15.500L7 .8L13 15.500M3.200 10.500H10.800" /></svg></TrayItem>
        <TrayItem $w={21}>
          <svg width="15" height="13" viewBox="0 0 15 13" fill="none" stroke="#222" strokeWidth="1.200">
            <path d="M.8 4.500Q7.500 -1.800 14.200 4.500" stroke="#a8b0bb" /><path d="M2.800 6.800Q7.500 2.300 12.200 6.800M4.800 9Q7.500 6.300 10.200 9" /><circle cx="7.500" cy="10.800" r="1.100" fill="#222" />
          </svg>
        </TrayItem>
        <TrayItem $w={26}>
          <svg width="17" height="14" viewBox="0 0 17 14" fill="none" stroke="#222" strokeWidth="1.100">
            <path d="M1 5H3.500L7.500 1.500V12.500L3.500 9H1ZM9.500 4.500Q11 7 9.500 9.500M11.700 2.800Q14.200 7 11.700 11.200" /><path d="M13.800 1.500Q17.200 7 13.800 12.500" stroke="#a8b0bb" />
          </svg>
        </TrayItem>
        <TrayItem $w={13} />
        <Stack $end><Fit w={28}>10:18</Fit><Fit w={61}>2026/07/25</Fit></Stack>
      </Tray>
    </Taskbar>
  );
}

export default function App() {
  return (
    <Screen>
      <Global />
      <Browser />
      <Site />
      <Bar />
    </Screen>
  );
}
